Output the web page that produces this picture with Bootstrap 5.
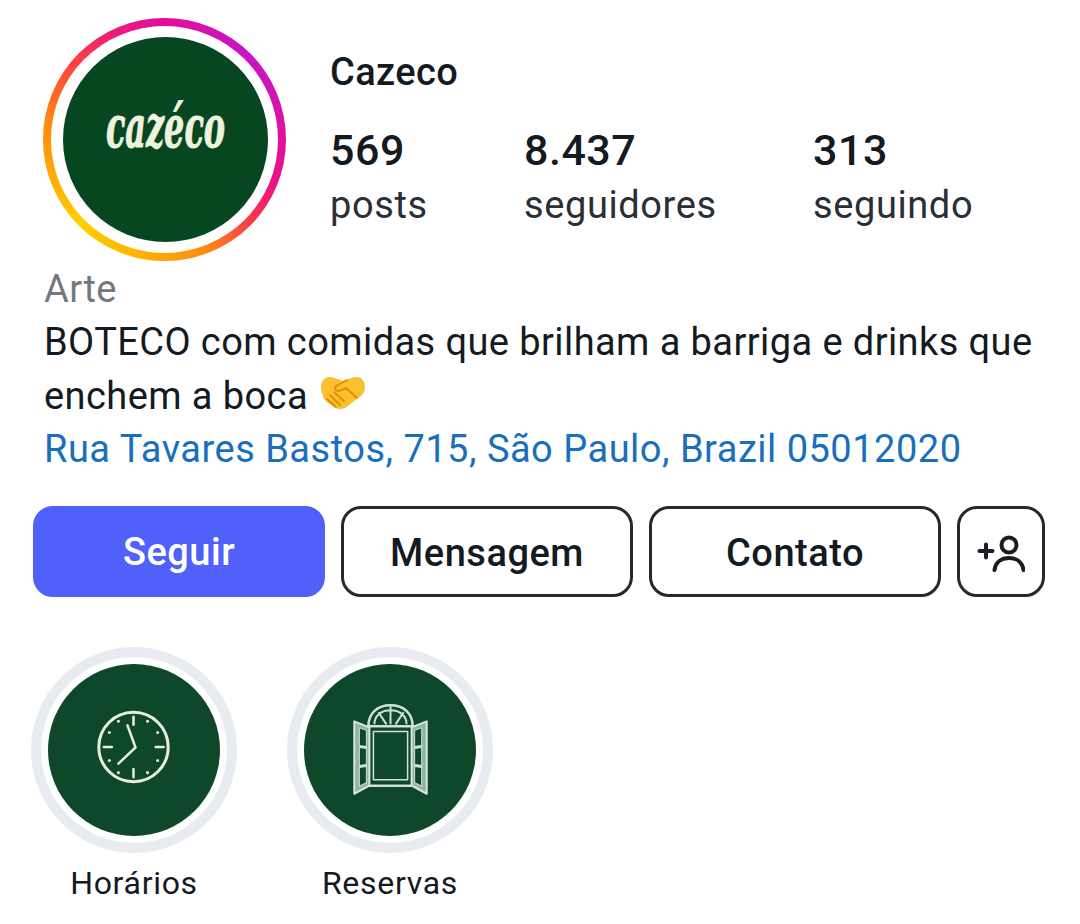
<!doctype html>
<html lang="pt-BR">
<head>
<meta charset="utf-8">
<title>Cazeco</title>
<link href="https://cdn.jsdelivr.net/npm/bootstrap@5.3.0/dist/css/bootstrap.min.css" rel="stylesheet">
<style>
html,body{background:#fff;width:1080px;height:924px;overflow:hidden}
body{font-family:Roboto,"Liberation Sans",sans-serif;color:#141a22;}
.page-wrap{padding:18px 35px 0 33px}
.head-row{padding-left:10px}
.avatar-ring{width:243px;height:243px;border-radius:50%;flex:none;position:relative;display:flex;align-items:center;justify-content:center;
 background:conic-gradient(from 0deg,#e10d9e 0deg,#c914c4 45deg,#d912a8 80deg,#ea1285 110deg,#f8304f 130deg,#ff8a10 160deg,#ffb000 190deg,#ffd000 225deg,#ffa808 255deg,#ff8510 280deg,#fb4040 310deg,#ee1c7c 335deg,#e10d9e 360deg)}
.avatar-ring::before{content:"";position:absolute;inset:8px;background:#fff;border-radius:50%}
.avatar-disc{width:205px;height:205px;border-radius:50%;background:#064722;position:relative;display:block;margin:-1px 0 0 1px}
.meta-col{margin-left:45px;padding-top:32px}
.acct-name{font-size:38px;font-weight:500;line-height:44px;margin-left:-1px;letter-spacing:.4px}
.stat-row{margin-top:34px;margin-left:-1px}
.stat-a{width:194px}.stat-b{width:289px}
.stat-num{font-size:43px;font-weight:500;line-height:44px;letter-spacing:.5px}
.stat-lbl{font-size:38px;line-height:44px;letter-spacing:.6px;margin-top:11px;color:#2a2f36}
.bio{padding-left:12px;margin-top:2px;font-size:38px;line-height:53.3px;letter-spacing:.42px;white-space:nowrap;margin-left:-1px}
.bio-cat{color:#737880}
.bio-link{color:#1a6fbc;text-decoration:none;display:block;letter-spacing:.5px}
.hand{width:46px;height:34px;vertical-align:-1px;margin-left:2px}
.act-row{margin-top:30px;gap:16px}
.act-btn{width:292px;height:91px;border-radius:20px;border:3px solid #25282c;background:#fff;color:#141a22;font-size:38px;font-weight:500;display:flex;align-items:center;justify-content:center;padding:3px 0 0;letter-spacing:.5px}
.act-btn:hover{background:#fff;color:#141a22;border-color:#25282c}
.act-primary,.act-primary:hover{background:#4f60fb;border-color:#4f60fb;color:#fff;padding-top:1px}
.act-icon{width:88px;padding:0}
.hl-row{margin:50px 0 0 -2px;gap:50px}
.hl-item{width:206px}
.hl-ring{width:206px;height:206px;border-radius:50%;border:10px solid #e8ecf0;padding:7px}
.hl-disc{width:100%;height:100%;border-radius:50%;background:#0f472a;display:block}
.hl-lbl{font-size:32px;line-height:40px;margin-top:10px;text-align:center;letter-spacing:.7px;white-space:nowrap}
</style>
</head>
<body>
<main class="page-wrap">
  <section class="head-row d-flex">
    <div class="avatar-ring">
      <svg class="avatar-disc" viewBox="0 0 205 205" role="img" aria-label="cazéco">
        <text transform="translate(102.500 110) scale(.55 1)" x="0" y="0" text-anchor="middle" font-family="DejaVu Serif, serif" font-weight="700" font-style="italic" font-size="58" fill="#eff2dc" stroke="#eff2dc" stroke-width="1">cazéco</text>
      </svg>
    </div>
    <div class="meta-col">
      <div class="acct-name">Cazeco</div>
      <div class="stat-row d-flex">
        <div class="stat-a"><div class="stat-num">569</div><div class="stat-lbl">posts</div></div>
        <div class="stat-b"><div class="stat-num">8.437</div><div class="stat-lbl">seguidores</div></div>
        <div><div class="stat-num">313</div><div class="stat-lbl">seguindo</div></div>
      </div>
    </div>
  </section>
  <section class="bio">
    <div class="bio-cat">Arte</div>
    <div>BOTECO com comidas que brilham a barriga e drinks que</div>
    <div>enchem a boca <svg class="hand" viewBox="0 0 46 34" aria-hidden="true">
      <path d="M1 11C1 5 5 1 9 1c4 0 8 2 14 4 6-2 10-4 14-4 4 0 8 4 8 10 0 5-3 9-7 11l-9 7c-3 3-6 4-9 4-4 0-8-3-12-6l-4-4C3 20 1 16 1 11z" fill="#fbc02d"/>
      <path d="M27 4l-11 6c-2 2-1 5 2 5 3 0 6-2 8-3l11 10M10 19l10 10M14 16l10 9M7 23l9 8" fill="none" stroke="#e08e00" stroke-width="1.800" stroke-linecap="round" stroke-linejoin="round"/>
    </svg></div>
    <a class="bio-link" href="#">Rua Tavares Bastos, 715, São Paulo, Brazil 05012020</a>
  </section>
  <section class="act-row d-flex">
    <button type="button" class="btn act-btn act-primary">Seguir</button>
    <button type="button" class="btn act-btn">Mensagem</button>
    <button type="button" class="btn act-btn">Contato</button>
    <button type="button" class="btn act-btn act-icon" aria-label="Adicionar">
      <svg width="48" height="40" viewBox="0 0 48 40" fill="none" stroke="#1a1d21" stroke-width="4" stroke-linecap="round">
        <circle cx="32" cy="13" r="7.500"/>
        <path d="M17.500 38c1-8 7-12 14.500-12s13.500 4 14.500 12"/>
        <path d="M2.500 19h13M9 12.500v13"/>
      </svg>
    </button>
  </section>
  <section class="hl-row d-flex">
    <div class="hl-item">
      <div class="hl-ring">
        <svg class="hl-disc" viewBox="0 0 171 171" aria-hidden="true" fill="none" stroke="#e6efd9" stroke-linecap="round">
          <circle cx="85" cy="82.500" r="34.500" stroke-width="3"/>
          <path d="M85 52.500v8M85 104.500v8M55.500 82.500h8M107 82.500h8" stroke-width="2.500"/>
          <path d="M79 61l8 22-17 16" stroke-width="2.500" stroke-linejoin="round"/>
          <g fill="#e6efd9" stroke="none"><circle cx="70" cy="57" r="1.500"/><circle cx="99" cy="57" r="1.500"/><circle cx="61" cy="68" r="1.500"/><circle cx="109" cy="68" r="1.500"/><circle cx="61" cy="96" r="1.500"/><circle cx="109" cy="96" r="1.500"/><circle cx="70" cy="108" r="1.500"/><circle cx="99" cy="108" r="1.500"/></g>
        </svg>
      </div>
      <div class="hl-lbl">Horários</div>
    </div>
    <div class="hl-item">
      <div class="hl-ring">
        <svg class="hl-disc" viewBox="0 0 171 171" aria-hidden="true" fill="none" stroke="#cfe3d2" stroke-linejoin="round">
          <path d="M64 62c0-13 9-21 22-21s22 8 22 21z" stroke-width="2.500"/>
          <path d="M70 60c0-9 7-14 16-14s16 5 16 14M86 42v18M74 48l8 12M99 48l-8 12" stroke-width="2"/>
          <path d="M64 62h44v59H64z" fill="#0f472a" stroke-width="2.500"/>
          <path d="M69 67h34v48H69z" stroke-width="1.500"/>
          <path d="M65 63L50 57v72l15-8zM107 63l15-6v72l-15-8z" fill="#8fb59a" stroke="#d6e8d8" stroke-width="2"/>
          <path d="M55 63.500v58l7-3.500V66zM117 63.500v58l-7-3.500V66z" fill="#0f472a" stroke="#cfe3d2" stroke-width="1"/>
          <path d="M55 82l7 1M55 102l7-1M117 82l-7 1M117 102l-7-1" stroke-width="3"/>
        </svg>
      </div>
      <div class="hl-lbl">Reservas</div>
    </div>
  </section>
</main>
<script src="https://cdn.jsdelivr.net/npm/bootstrap@5.3.0/dist/js/bootstrap.bundle.min.js"></script>
</body>
</html>
